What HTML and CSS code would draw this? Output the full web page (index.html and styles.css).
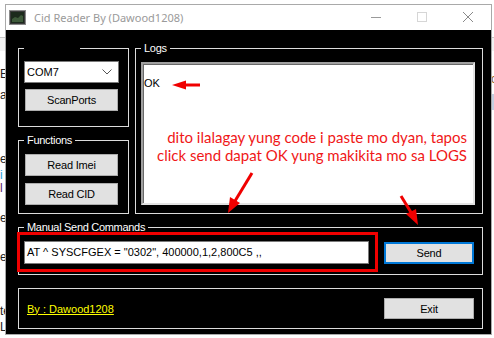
FILE: index.html
```html
<!DOCTYPE html>
<html lang="en">
<head>
    <meta charset="UTF-8">
    <title>Cid Reader By (Dawood1208)</title>
    <link rel="stylesheet" href="styles.css">
</head>
<body>
<div class="desk">
    <!-- bits of the app behind the window -->
    <div class="behind behind-left">
        <div class="bar"></div>
        <span class="frag f1">EL</span>
        <span class="frag f2">ar</span>
        <span class="frag f3">er</span>
        <span class="frag f4 blue">i</span>
        <span class="frag f5 purple">l</span>
        <span class="frag f6">e</span>
        <span class="frag f7">er</span>
        <span class="frag f8">te</span>
        <span class="frag f9">L</span>
    </div>
    <div class="behind behind-right">
        <div class="bar"></div>
        <span class="frag r1">o</span>
        <div class="sel"></div>
    </div>

    <div class="window">
        <div class="titlebar">
            <svg class="app-icon" width="17" height="15" viewBox="0 0 17 15">
                <rect x="0.5" y="0.5" width="16" height="14" fill="#3a3a3a" stroke="#8a8a8a"/>
                <rect x="2" y="2" width="13" height="11" fill="#1c2a1c"/>
                <path d="M3 9 L6 7 L9 8 L12 5 L14 6 L14 12 L3 12 Z" fill="#3e5a3a"/>
            </svg>
            <span class="title">Cid Reader By (Dawood1208)</span>
            <div class="caption-btns">
                <svg class="cap" width="46" height="25" viewBox="0 0 46 25"><path d="M18 12.5 H28" stroke="#9a9a9a"/></svg>
                <svg class="cap" width="46" height="25" viewBox="0 0 46 25"><rect x="18.5" y="7.5" width="9" height="9" fill="none" stroke="#d6d6d6"/></svg>
                <svg class="cap" width="46" height="25" viewBox="0 0 46 25"><path d="M18 7 L28 17 M28 7 L18 17" stroke="#8a8a8a"/></svg>
            </div>
        </div>

        <div class="client">
            <div class="top-row">
                <div class="left-col">
                    <div class="group g-port">
                        <span class="legend blank"></span>
                        <div class="combo">
                            <span>COM7</span>
                            <svg width="10" height="6" viewBox="0 0 10 6"><path d="M0.5 0.5 L5 5 L9.5 0.5" fill="none" stroke="#555"/></svg>
                        </div>
                        <button class="btn">ScanPorts</button>
                    </div>
                    <div class="group g-func">
                        <span class="legend">Functions</span>
                        <button class="btn">Read Imei</button>
                        <button class="btn">Read CID</button>
                    </div>
                </div>
                <div class="group g-logs">
                    <span class="legend">Logs</span>
                    <div class="logbox">
                        <div class="log-line">OK</div>
                        <div class="note">dito ilalagay yung code i paste mo dyan, tapos<br>click send dapat OK yung makikita mo sa LOGS</div>
                    </div>
                </div>
            </div>

            <div class="group g-manual">
                <span class="legend">Manual Send Commands</span>
                <div class="cmd">AT ^ SYSCFGEX = "0302", 400000,1,2,800C5 ,,</div>
                <button class="btn focused">Send</button>
            </div>

            <div class="group g-footer">
                <a class="credit" href="#">By : Dawood1208</a>
                <button class="btn">Exit</button>
            </div>
        </div>
    </div>

    <!-- red annotations drawn over the screenshot -->
    <svg class="marks" width="494" height="338" viewBox="0 0 494 338">
        <rect x="18.5" y="233.5" width="358" height="37" fill="none" stroke="#f00000" stroke-width="3"/>
        <g fill="#f00000" stroke="#f00000">
            <path d="M200 85 H182" stroke-width="3"/>
            <path d="M172 85 L186 80.5 L186 89.5 Z" stroke="none"/>
            <path d="M252 173 L235 201" stroke-width="3"/>
            <path d="M228 213 L230 197 L240 203 Z" stroke="none"/>
            <path d="M401 196 L412 214" stroke-width="3"/>
            <path d="M418 225 L406 214 L416 209 Z" stroke="none"/>
        </g>
    </svg>
</div>
</body>
</html>
```

FILE: styles.css
```css
* {
    box-sizing: border-box;
}

body {
    margin: 0;
    background: #ffffff;
    font-family: "Liberation Sans", Arial, sans-serif;
}

.desk {
    position: relative;
    width: 494px;
    height: 338px;
    overflow: hidden;
}

/* app showing behind the window */
.behind {
    position: absolute;
    top: 0;
    height: 338px;
    overflow: hidden;
    font-size: 12px;
    color: #222;
}
.behind-left {
    left: 0;
    width: 6px;
}
.behind-right {
    left: 491px;
    width: 3px;
}
.behind .bar {
    position: absolute;
    top: 37px;
    left: 0;
    right: 0;
    height: 14px;
    background: #f2f2f2;
    border-top: 1px solid #c8c8c8;
}
.frag {
    position: absolute;
    left: 0;
    line-height: 11px;
}
.f1 { top: 69px; }
.f2 { top: 90px; }
.f3 { top: 154px; }
.f4 { top: 170px; color: #2aa0e0; }
.f5 { top: 183px; color: #5a1a6a; }
.f6 { top: 213px; }
.f7 { top: 252px; }
.f8 { top: 306px; }
.f9 { top: 322px; }
.r1 { top: 74px; color: #8a5a10; }
.behind-right .sel {
    position: absolute;
    top: 94px;
    left: 0;
    width: 3px;
    height: 16px;
    background: #c4cfe0;
}

/* the window */
.window {
    position: absolute;
    left: 5px;
    top: 4px;
    width: 487px;
    height: 331px;
    border: 1px solid #a9a9a9;
    background: #000;
    display: flex;
    flex-direction: column;
}

.titlebar {
    height: 25px;
    background: #fff;
    display: flex;
    align-items: center;
    flex-shrink: 0;
}
.app-icon {
    margin-left: 3px;
}
.title {
    margin-left: 8px;
    font-family: "Noto Sans", "Open Sans", sans-serif;
    font-size: 11px;
    color: #9a9a9a;
}
.caption-btns {
    margin-left: auto;
    display: flex;
}

.client {
    flex: 1;
    padding: 18px 8px 0 12px;
    display: flex;
    flex-direction: column;
    gap: 13px;
}

.top-row {
    display: flex;
    gap: 6px;
    height: 166px;
}
.left-col {
    width: 111px;
    display: flex;
    flex-direction: column;
    gap: 13px;
}

.group {
    position: relative;
    border: 1px solid #dcdcdc;
}
.legend {
    position: absolute;
    top: -8px;
    left: 5px;
    padding: 0 3px;
    background: #000;
    color: #fff;
    font-size: 11px;
    letter-spacing: -0.3px;
    line-height: 15px;
}
.legend.blank {
    width: 56px;
    height: 15px;
}

.g-port {
    height: 79px;
    padding: 12px 0 0 5px;
}
.g-func {
    height: 74px;
    padding: 13px 0 0 6px;
}
.g-logs {
    width: 348px;
    padding: 13px 0 0 5px;
}

.combo {
    width: 95px;
    height: 22px;
    background: #fff;
    border: 1px solid #7a7a7a;
    display: flex;
    align-items: center;
    justify-content: space-between;
    padding: 0 6px 0 2px;
    font-size: 11px;
    color: #000;
}

.btn {
    display: block;
    width: 93px;
    height: 22px;
    padding: 0;
    background: #e1e1e1;
    border: 1px solid #adadad;
    font-family: "Liberation Sans", Arial, sans-serif;
    font-size: 11px;
    letter-spacing: -0.2px;
    color: #000;
}
.g-port .btn {
    margin: 6px 0 0 1px;
}
.g-func .btn + .btn {
    margin-top: 7px;
}

.logbox {
    width: 334px;
    height: 143px;
    background: #fff;
    border-top: 2px solid #a0a0a0;
    border-left: 2px solid #a0a0a0;
    border-right: 2px solid #e3e3e3;
    border-bottom: 2px solid #e3e3e3;
    box-shadow: inset 1px 1px #696969;
    padding: 12px 0 0 1px;
}
.log-line {
    font-size: 11px;
    color: #000;
    line-height: 15px;
}
.note {
    margin-top: 37px;
    padding-right: 6px;
    text-align: right;
    font-family: Lato, "Open Sans", sans-serif;
    font-size: 15px;
    line-height: 18px;
    color: #f01818;
}

.g-manual {
    height: 48px;
    display: flex;
    align-items: center;
    padding: 3px 0 0 5px;
}
.cmd {
    width: 345px;
    height: 23px;
    background: #fff;
    border: 1px solid #7a7a7a;
    padding: 0 2px;
    font-size: 11px;
    line-height: 21px;
    color: #000;
    white-space: nowrap;
}
.g-manual .btn {
    width: 90px;
    margin-left: 15px;
}
.btn.focused {
    border: 2px solid #0078d7;
}

.g-footer {
    height: 41px;
    display: flex;
    align-items: center;
    padding: 0 0 0 8px;
}
.credit {
    color: #ffff00;
    font-size: 11px;
}
.g-footer .btn {
    width: 90px;
    height: 21px;
    margin-left: auto;
    margin-right: 8px;
}

.marks {
    position: absolute;
    left: 0;
    top: 0;
    pointer-events: none;
}
```
